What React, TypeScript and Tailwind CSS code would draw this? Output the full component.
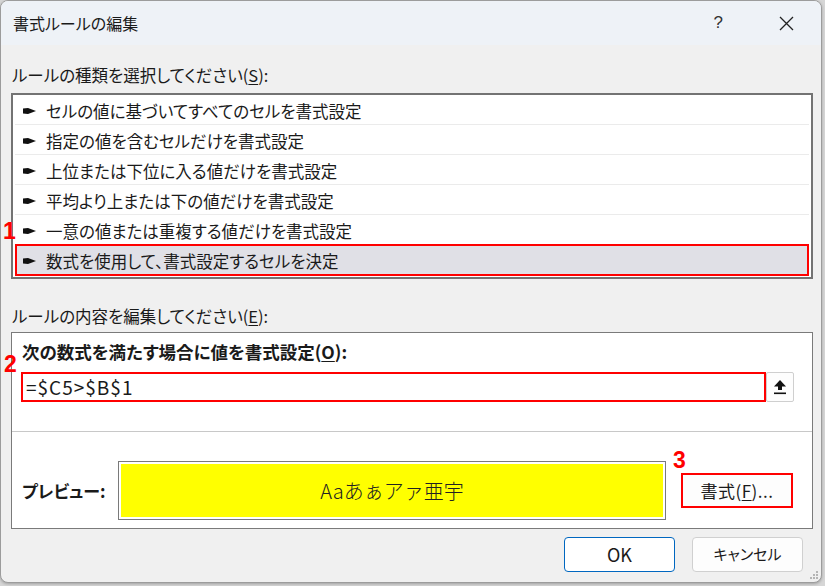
import React from 'react';

const jp = "font-['Noto_Sans_CJK_JP','Noto_Sans',sans-serif] [font-feature-settings:'palt']";

const rules = [
  'セルの値に基づいてすべてのセルを書式設定',
  '指定の値を含むセルだけを書式設定',
  '上位または下位に入る値だけを書式設定',
  '平均より上または下の値だけを書式設定',
  '一意の値または重複する値だけを書式設定',
  '数式を使用して、書式設定するセルを決定',
];

function Pointer() {
  return (
    <svg width="13" height="10" viewBox="0 0 13 10" className="shrink-0">
      <polygon points="0,2.5 5,2 13,5 5,8 0,7.5" fill="#111" />
    </svg>
  );
}

function Mark({ n, className }: { n: string; className: string }) {
  return (
    <span className={`absolute font-['Liberation_Sans',Arial,sans-serif] text-[23px] font-bold leading-none text-[#ff0000] ${className}`}>
      {n}
    </span>
  );
}

export default function App() {
  return (
    <div className={`relative w-[825px] h-[586px] bg-[#d6d6d6] overflow-hidden ${jp} text-[#1a1a1a]`}>
      <div className="flex flex-col w-[822px] h-[583px] rounded-[8px] border border-[#9c9c9c] overflow-hidden bg-[#f0f0f0] shadow-[0_1px_3px_rgba(0,0,0,0.25)]">
        {/* title bar */}
        <div className="flex items-center h-[44px] shrink-0 bg-[#eef2f7] pl-[12px]">
          <span className="text-[16px] leading-none">書式ルールの編集</span>
          <span className="ml-auto mr-[56px] text-[17px] font-['Liberation_Sans',sans-serif] font-light text-[#333]">?</span>
          <svg width="15" height="15" viewBox="0 0 15 15" className="mr-[27px]">
            <path d="M1 1 L14 14 M14 1 L1 14" stroke="#222" strokeWidth="1.3" />
          </svg>
        </div>

        {/* body */}
        <div className="flex flex-col flex-1 px-[10px]">
          <div className="mt-[20px] h-[20px] text-[16.5px] leading-[20px] pl-[1px]">
            ルールの種類を選択してください(<span className="underline underline-offset-2">S</span>):
          </div>

          <div className="mt-[8px] w-[802px] h-[186px] border-2 border-[#737373] bg-white px-[2px]">
            {rules.map((r, i) =>
              i === 5 ? (
                <div key={r} className="flex items-center gap-[10px] h-[32px] -mt-[1px] border-2 border-[#ff0000] bg-[#e0e0e6] pl-[6px] pt-[2px] text-[16.5px]">
                  <Pointer />
                  <span>{r}</span>
                </div>
              ) : (
                <div key={r} className="flex items-center gap-[10px] h-[30px] border-b border-[#ebebeb] pl-[8px] pt-[3px] text-[16.5px]">
                  <Pointer />
                  <span>{r}</span>
                </div>
              )
            )}
          </div>

          <div className="mt-[27px] h-[20px] text-[16.5px] leading-[20px] pl-[1px]">
            ルールの内容を編集してください(<span className="underline underline-offset-2">E</span>):
          </div>

          <div className="mt-[6px] w-[802px] h-[197px] border border-[#7a7a7a] bg-white flex flex-col">
            <div className="mt-[9px] ml-[10px] h-[20px] text-[17.5px] font-bold leading-[20px]">
              次の数式を満たす場合に値を書式設定(<span className="underline underline-offset-2">O</span>):
            </div>
            <div className="mt-[10px] ml-[9px] flex">
              <div className="flex items-center w-[745px] h-[30px] border-2 border-[#ff0000] pl-[3px] text-[19px] tracking-[1px]">
                =$C5&gt;$B$1
              </div>
              <div className="flex items-center justify-center w-[28px] h-[30px] border border-[#cfcfcf] rounded-[2px] bg-[#fdfdfd]">
                <svg width="12" height="15" viewBox="0 0 12 15">
                  <polygon points="6,0 0,6.5 12,6.5" fill="#111" />
                  <rect x="4" y="6" width="4" height="4" fill="#111" />
                  <rect x="0" y="12.5" width="12" height="1.6" fill="#111" />
                </svg>
              </div>
            </div>
            <div className="mt-[29px] h-px bg-[#c8c8c8]" />
            <div className="mt-[29px] flex items-center">
              <span className="ml-[10px] w-[96px] text-[17px] font-bold">プレビュー:</span>
              <div className="w-[548px] h-[59px] border border-[#7a7a7a] p-[2px]">
                <div className="flex items-center justify-center w-full h-full bg-[#ffff00] text-[20px] text-[#222] font-light [font-feature-settings:normal]">
                  Aaあぁアァ亜宇
                </div>
              </div>
              <div className="ml-[15px] flex items-center justify-center w-[112px] h-[35px] border-2 border-[#ff0000] bg-[#fdfdfd] text-[17px] tracking-[0.5px]">
                書式(<span className="underline underline-offset-2">F</span>)...
              </div>
            </div>
          </div>

          <div className="mt-[8px] flex justify-end gap-[17px] pr-[8px]">
            <div className="flex items-center justify-center w-[111px] h-[35px] rounded-[4px] border border-[#0067c0] bg-white text-[18px]">
              OK
            </div>
            <div className="flex items-center justify-center w-[111px] h-[35px] rounded-[4px] border border-[#d0d0d0] bg-[#fdfdfd] text-[15px]">
              キャンセル
            </div>
          </div>
        </div>
      </div>

      {/* resize grip */}
      <svg width="10" height="10" viewBox="0 0 10 10" className="absolute left-[809px] top-[570px]">
        <rect x="7" y="1" width="2" height="2" fill="#b5b5b5" />
        <rect x="4" y="4" width="2" height="2" fill="#b5b5b5" />
        <rect x="7" y="4" width="2" height="2" fill="#b5b5b5" />
        <rect x="1" y="7" width="2" height="2" fill="#b5b5b5" />
        <rect x="4" y="7" width="2" height="2" fill="#b5b5b5" />
        <rect x="7" y="7" width="2" height="2" fill="#b5b5b5" />
      </svg>

      <Mark n="1" className="left-[3px] top-[220px]" />
      <Mark n="2" className="left-[4px] top-[353px]" />
      <Mark n="3" className="left-[673px] top-[449px]" />
    </div>
  );
}
